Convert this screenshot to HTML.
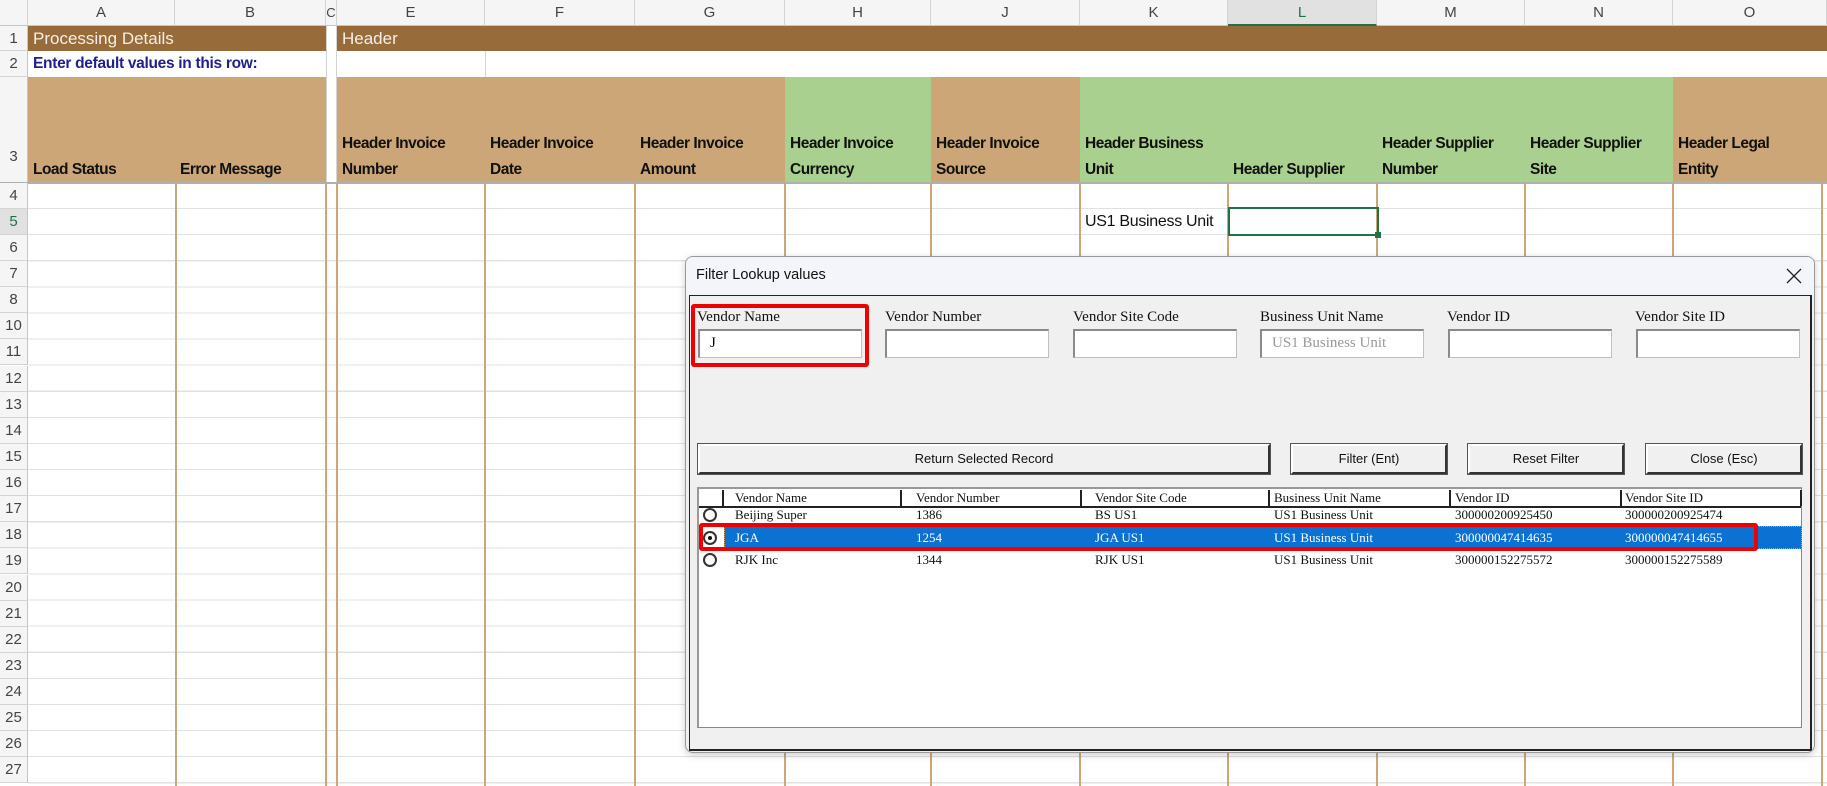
<!DOCTYPE html>
<html><head><meta charset="utf-8"><style>
*{margin:0;padding:0;box-sizing:border-box}
body{width:1827px;height:786px;overflow:hidden;background:#fff;position:relative;font-family:"Liberation Sans",sans-serif}
.a{position:absolute}
.colh{top:0;height:26px;background:#f5f5f5;border-right:1px solid #d4d4d4;border-bottom:1px solid #c6c6c6;color:#444;font-size:15px;text-align:center;line-height:26px}
.rowh{left:0;width:28px;background:#f5f5f5;border-bottom:1px solid #d4d4d4;border-right:1px solid #c6c6c6;color:#444;font-size:15px;text-align:center}
.hd{font-weight:bold;font-size:15.5px;color:#111;line-height:26px;padding-left:5px;letter-spacing:-0.5px}
.vl{top:183px;height:603px;width:2px;background:#cca677}
.lbl{font-family:"Liberation Serif",serif;font-size:15px;color:#111}
.tb{height:29px;width:164px;background:#fff;border:1px solid #c0c0c0;border-top:2px solid #8a8a8a;border-left:2px solid #8a8a8a;font-family:"Liberation Serif",serif;font-size:15px;padding:4px 10px}
.btn{top:444px;height:30px;background:#f0f0f0;border:2px solid #333;border-top-color:#fff;border-left-color:#fff;outline:1px solid #555;font-size:13px;text-align:center;line-height:26px;color:#111}
.lt{font-family:"Liberation Serif",serif;font-size:13px;color:#111;white-space:nowrap}
.radio{width:14px;height:14px;border:2px solid #333;border-radius:50%;background:#fff}
</style></head><body>
<div class="a colh" style="left:0;width:28px"></div>
<div class="a colh" style="left:28px;width:147px">A</div>
<div class="a colh" style="left:175px;width:151px">B</div>
<div class="a colh" style="left:326px;width:11px;font-size:13px">C</div>
<div class="a colh" style="left:337px;width:148px">E</div>
<div class="a colh" style="left:485px;width:150px">F</div>
<div class="a colh" style="left:635px;width:150px">G</div>
<div class="a colh" style="left:785px;width:146px">H</div>
<div class="a colh" style="left:931px;width:149px">J</div>
<div class="a colh" style="left:1080px;width:148px">K</div>
<div class="a colh" style="left:1228px;width:149px;background:#e1e1e1;color:#217346;border-bottom:2px solid #217346">L</div>
<div class="a colh" style="left:1377px;width:148px">M</div>
<div class="a colh" style="left:1525px;width:148px">N</div>
<div class="a colh" style="left:1673px;width:154px">O</div>
<div class="a rowh" style="top:26px;height:25px;line-height:25px">1</div>
<div class="a rowh" style="top:51px;height:26px;line-height:26px">2</div>
<div class="a rowh" style="top:77px;height:106px;line-height:160px">3</div>
<div class="a" style="left:28px;top:26px;width:298px;height:25px;background:#976c3a;color:#f4eee6;font-size:17px;line-height:25px;padding-left:5px">Processing Details</div>
<div class="a" style="left:337px;top:26px;width:1490px;height:25px;background:#976c3a;color:#f4eee6;font-size:17px;line-height:25px;padding-left:5px">Header</div>
<div class="a" style="left:326px;top:26px;width:11px;height:157px;background:#fff;border-left:1px solid #d4d4d4;border-right:1px solid #d4d4d4"></div>
<div class="a" style="left:28px;top:51px;width:500px;height:26px;color:#1f1f8f;font-weight:bold;font-size:15.5px;line-height:26px;padding-left:5px;letter-spacing:-0.3px">Enter default values in this row:</div>
<div class="a" style="left:485px;top:51px;width:1px;height:26px;background:#d4d4d4"></div>
<div class="a" style="left:28px;top:77px;width:298px;height:106px;background:#cca677"></div>
<div class="a" style="left:337px;top:77px;width:448px;height:106px;background:#cca677"></div>
<div class="a" style="left:785px;top:77px;width:146px;height:106px;background:#a9d08e"></div>
<div class="a" style="left:931px;top:77px;width:149px;height:106px;background:#cca677"></div>
<div class="a" style="left:1080px;top:77px;width:593px;height:106px;background:#a9d08e"></div>
<div class="a" style="left:1673px;top:77px;width:154px;height:106px;background:#cca677"></div>
<div class="a" style="left:0;top:182px;width:1827px;height:2px;background:#b0b0b0"></div>
<div class="a hd" style="left:28px;top:157px">Load Status</div>
<div class="a hd" style="left:175px;top:157px">Error Message</div>
<div class="a hd" style="left:337px;top:131px">Header Invoice<br>Number</div>
<div class="a hd" style="left:485px;top:131px">Header Invoice<br>Date</div>
<div class="a hd" style="left:635px;top:131px">Header Invoice<br>Amount</div>
<div class="a hd" style="left:785px;top:131px">Header Invoice<br>Currency</div>
<div class="a hd" style="left:931px;top:131px">Header Invoice<br>Source</div>
<div class="a hd" style="left:1080px;top:131px">Header Business<br>Unit</div>
<div class="a hd" style="left:1228px;top:157px">Header Supplier</div>
<div class="a hd" style="left:1377px;top:131px">Header Supplier<br>Number</div>
<div class="a hd" style="left:1525px;top:131px">Header Supplier<br>Site</div>
<div class="a hd" style="left:1673px;top:131px">Header Legal<br>Entity</div>
<div class="a" style="left:28px;top:183px;width:1799px;height:603px;background:repeating-linear-gradient(to bottom,transparent 0,transparent 25px,#e1e1e1 25px,#e1e1e1 26.1px)"></div>
<div class="a vl" style="left:175px"></div>
<div class="a vl" style="left:325px"></div>
<div class="a vl" style="left:336px"></div>
<div class="a vl" style="left:484px"></div>
<div class="a vl" style="left:634px"></div>
<div class="a vl" style="left:784px"></div>
<div class="a vl" style="left:930px"></div>
<div class="a vl" style="left:1079px"></div>
<div class="a vl" style="left:1227px"></div>
<div class="a vl" style="left:1376px"></div>
<div class="a vl" style="left:1524px"></div>
<div class="a vl" style="left:1672px"></div>
<div class="a vl" style="left:1821px"></div>
<div class="a" style="left:1085px;top:209px;font-size:16px;color:#111;line-height:26px;letter-spacing:-0.3px">US1 Business Unit</div>
<div class="a" style="left:1228px;top:207px;width:151px;height:29px;border:2px solid #217346"></div>
<div class="a" style="left:1375px;top:232px;width:6px;height:6px;background:#217346"></div>
<div class="a" style="left:26px;top:209px;width:2px;height:26px;background:#217346"></div>
<!-- dialog -->
<div class="a" style="left:685px;top:256px;width:1130px;height:497px;background:#f0f0f0;border:1px solid #999;border-radius:8px;box-shadow:0 2px 8px rgba(0,0,0,.2);overflow:hidden">
 <div class="a" style="left:0;top:0;width:1130px;height:38px;background:#f3f5fa"></div>
 <div class="a" style="left:10px;top:10px;font-size:14.5px;color:#111">Filter Lookup values</div>
 <svg class="a" style="left:1100px;top:11px" width="16" height="16" viewBox="0 0 16 16"><path d="M1 1L15 15M15 1L1 15" stroke="#222" stroke-width="1.3"/></svg>
 <div class="a" style="left:3px;top:38px;width:1123px;height:456px;border:1px solid #222;border-right:2px solid #222;border-bottom:2px solid #222"></div>
</div>
<div class="a" style="left:691px;top:304px;width:178px;height:63px;border:4px solid #e00;border-radius:3px"></div>
<div class="a lbl" style="left:697px;top:309px">Vendor Name</div>
<div class="a lbl" style="left:885px;top:309px">Vendor Number</div>
<div class="a lbl" style="left:1073px;top:309px">Vendor Site Code</div>
<div class="a lbl" style="left:1260px;top:309px">Business Unit Name</div>
<div class="a lbl" style="left:1447px;top:309px">Vendor ID</div>
<div class="a lbl" style="left:1635px;top:309px">Vendor Site ID</div>
<div class="a tb" style="left:698px;top:329px">J</div>
<div class="a tb" style="left:885px;top:329px"></div>
<div class="a tb" style="left:1073px;top:329px"></div>
<div class="a tb" style="left:1260px;top:329px;color:#999">US1 Business Unit</div>
<div class="a tb" style="left:1448px;top:329px"></div>
<div class="a tb" style="left:1636px;top:329px"></div>
<div class="a btn" style="left:698px;width:572px">Return Selected Record</div>
<div class="a btn" style="left:1291px;width:156px">Filter (Ent)</div>
<div class="a btn" style="left:1468px;width:156px">Reset Filter</div>
<div class="a btn" style="left:1646px;width:156px">Close (Esc)</div>
<div class="a" style="left:697px;top:487px;width:1105px;height:241px;background:#fff;border:1px solid #888;border-top:2px solid #999;border-left:2px solid #999"></div>
<div class="a" style="left:699px;top:506px;width:1102px;height:2px;background:#222"></div>
<div class="a" style="left:722px;top:490px;width:2px;height:16px;background:#222"></div>
<div class="a" style="left:900px;top:490px;width:2px;height:16px;background:#222"></div>
<div class="a" style="left:1080px;top:490px;width:2px;height:16px;background:#222"></div>
<div class="a" style="left:1268px;top:490px;width:2px;height:16px;background:#222"></div>
<div class="a" style="left:1449px;top:490px;width:2px;height:16px;background:#222"></div>
<div class="a" style="left:1620px;top:490px;width:2px;height:16px;background:#222"></div>
<div class="a" style="left:1800px;top:490px;width:2px;height:16px;background:#222"></div>
<div class="a lt" style="left:735px;top:490px">Vendor Name</div>
<div class="a lt" style="left:916px;top:490px">Vendor Number</div>
<div class="a lt" style="left:1095px;top:490px">Vendor Site Code</div>
<div class="a lt" style="left:1274px;top:490px">Business Unit Name</div>
<div class="a lt" style="left:1455px;top:490px">Vendor ID</div>
<div class="a lt" style="left:1625px;top:490px">Vendor Site ID</div>
<div class="a" style="left:724px;top:526px;width:1078px;height:23px;background:#0b72d4;border:1px dotted #c9a060"></div>
<div class="a" style="left:699px;top:523px;width:1059px;height:28px;border:4px solid #e00;border-radius:3px"></div>
<div class="a radio" style="left:703px;top:508px"></div>
<div class="a radio" style="left:703px;top:531px"><div style="width:4px;height:4px;background:#111;border-radius:50%;margin:3px"></div></div>
<div class="a radio" style="left:703px;top:553px"></div>
<div class="a lt" style="left:735px;top:507px">Beijing Super</div>
<div class="a lt" style="left:916px;top:507px">1386</div>
<div class="a lt" style="left:1095px;top:507px">BS US1</div>
<div class="a lt" style="left:1274px;top:507px">US1 Business Unit</div>
<div class="a lt" style="left:1455px;top:507px">300000200925450</div>
<div class="a lt" style="left:1625px;top:507px">300000200925474</div>
<div class="a lt" style="left:735px;top:530px;color:#fff">JGA</div>
<div class="a lt" style="left:916px;top:530px;color:#fff">1254</div>
<div class="a lt" style="left:1095px;top:530px;color:#fff">JGA US1</div>
<div class="a lt" style="left:1274px;top:530px;color:#fff">US1 Business Unit</div>
<div class="a lt" style="left:1455px;top:530px;color:#fff">300000047414635</div>
<div class="a lt" style="left:1625px;top:530px;color:#fff">300000047414655</div>
<div class="a lt" style="left:735px;top:552px">RJK Inc</div>
<div class="a lt" style="left:916px;top:552px">1344</div>
<div class="a lt" style="left:1095px;top:552px">RJK US1</div>
<div class="a lt" style="left:1274px;top:552px">US1 Business Unit</div>
<div class="a lt" style="left:1455px;top:552px">300000152275572</div>
<div class="a lt" style="left:1625px;top:552px">300000152275589</div>
<div class="a rowh" style="top:183px;height:26px;line-height:26px">4</div>
<div class="a rowh" style="top:209px;height:26px;line-height:26px;color:#217346;background:#e1e1e1">5</div>
<div class="a rowh" style="top:235px;height:26px;line-height:26px">6</div>
<div class="a rowh" style="top:261px;height:26px;line-height:26px">7</div>
<div class="a rowh" style="top:287px;height:26px;line-height:26px">8</div>
<div class="a rowh" style="top:313px;height:26px;line-height:26px">10</div>
<div class="a rowh" style="top:339px;height:26px;line-height:26px">11</div>
<div class="a rowh" style="top:366px;height:26px;line-height:26px">12</div>
<div class="a rowh" style="top:392px;height:26px;line-height:26px">13</div>
<div class="a rowh" style="top:418px;height:26px;line-height:26px">14</div>
<div class="a rowh" style="top:444px;height:26px;line-height:26px">15</div>
<div class="a rowh" style="top:470px;height:26px;line-height:26px">16</div>
<div class="a rowh" style="top:496px;height:26px;line-height:26px">17</div>
<div class="a rowh" style="top:522px;height:26px;line-height:26px">18</div>
<div class="a rowh" style="top:548px;height:26px;line-height:26px">19</div>
<div class="a rowh" style="top:575px;height:26px;line-height:26px">20</div>
<div class="a rowh" style="top:601px;height:26px;line-height:26px">21</div>
<div class="a rowh" style="top:627px;height:26px;line-height:26px">22</div>
<div class="a rowh" style="top:653px;height:26px;line-height:26px">23</div>
<div class="a rowh" style="top:679px;height:26px;line-height:26px">24</div>
<div class="a rowh" style="top:705px;height:26px;line-height:26px">25</div>
<div class="a rowh" style="top:731px;height:26px;line-height:26px">26</div>
<div class="a rowh" style="top:757px;height:26px;line-height:26px">27</div>
</body></html>
